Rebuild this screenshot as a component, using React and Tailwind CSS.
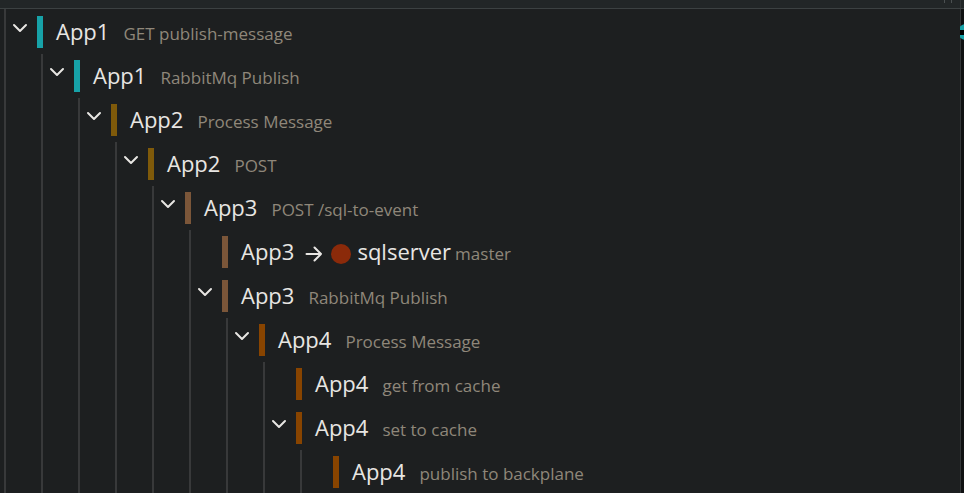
import React, { useState } from "react";

const trace = {
  app: "App1",
  label: "GET publish-message",
  bar: "bg-[#17a2a8]",
  children: [
    {
      app: "App1",
      label: "RabbitMq Publish",
      bar: "bg-[#17a2a8]",
      children: [
        {
          app: "App2",
          label: "Process Message",
          bar: "bg-[#7f5a0a]",
          children: [
            {
              app: "App2",
              label: "POST",
              bar: "bg-[#7f5a0a]",
              children: [
                {
                  app: "App3",
                  label: "POST /sql-to-event",
                  bar: "bg-[#7b5639]",
                  children: [
                    { app: "App3", target: "sqlserver", label: "master", bar: "bg-[#7b5639]" },
                    {
                      app: "App3",
                      label: "RabbitMq Publish",
                      bar: "bg-[#7b5639]",
                      children: [
                        {
                          app: "App4",
                          label: "Process Message",
                          bar: "bg-[#884400]",
                          children: [
                            { app: "App4", label: "get from cache", bar: "bg-[#884400]" },
                            {
                              app: "App4",
                              label: "set to cache",
                              bar: "bg-[#884400]",
                              children: [
                                { app: "App4", label: "publish to backplane", bar: "bg-[#884400]" },
                              ],
                            },
                          ],
                        },
                      ],
                    },
                  ],
                },
              ],
            },
          ],
        },
      ],
    },
  ],
};

function Chevron({ open }) {
  return (
    <svg
      viewBox="0 0 16 10"
      className={open ? "h-[10px] w-4" : "h-[10px] w-4 -rotate-90"}
      fill="none"
      stroke="#e8e6e3"
      strokeWidth="2"
      strokeLinecap="round"
      strokeLinejoin="round"
      aria-hidden="true"
    >
      <path d="M2 2l6 6 6-6" />
    </svg>
  );
}

function Span({ span }) {
  const [open, setOpen] = useState(true);
  const hasChildren = Boolean(span.children);

  return (
    <li>
      <div className="flex h-11 items-center whitespace-nowrap">
        <div className="flex w-[31px] shrink-0 pb-2 pl-[6px]">
          {hasChildren && (
            <button
              type="button"
              aria-label={`Toggle ${span.app} ${span.label}`}
              aria-expanded={open}
              onClick={() => setOpen(!open)}
            >
              <Chevron open={open} />
            </button>
          )}
        </div>
        <span className={`h-8 w-[6px] shrink-0 ${span.bar}`} />
        <div className="flex items-baseline pl-[13px]">
          <span className="text-[22px] leading-8 text-[#e8e6e3]">{span.app}</span>
          {span.target && (
            <>
              <svg
                viewBox="0 0 18 16"
                className="ml-[11px] mt-1 h-4 w-[18px] self-center"
                fill="none"
                stroke="#e8e6e3"
                strokeWidth="2"
                strokeLinecap="round"
                strokeLinejoin="round"
                aria-hidden="true"
              >
                <path d="M1.500 8H16M9.500 1.500L16 8l-6.500 6.500" />
              </svg>
              <span className="ml-2 mt-1 size-5 self-center rounded-full bg-[#8b2a0a]" />
              <span className="ml-[6px] text-[22px] leading-8 text-[#e8e6e3]">{span.target}</span>
            </>
          )}
          <span
            className={`text-[17px] leading-8 text-[#8f877a] ${span.target ? "ml-1" : "ml-[14px]"}`}
          >
            {span.label}
          </span>
        </div>
      </div>
      {hasChildren && open && (
        <ul className="ml-[35px] border-l-2 border-[#38393a]">
          {span.children.map((child, i) => (
            <Span key={i} span={child} />
          ))}
        </ul>
      )}
    </li>
  );
}

export default function App() {
  return (
    <div className="flex h-screen flex-col overflow-hidden bg-[#1d1f20] font-['Open_Sans','Noto_Sans',sans-serif]">
      <header className="flex h-[9px] shrink-0 items-start justify-end border-b border-[#3c4142] bg-[#222627]">
        <span className="mr-[6px] h-[3px] w-px bg-[#4b5051]" />
        <span className="mr-2 h-[3px] w-px bg-[#4b5051]" />
        <span className="mr-[3px] h-full w-px bg-[#303435]" />
      </header>
      <div className="flex min-h-0 flex-1">
        <main className="min-w-0 flex-1 overflow-hidden">
          <ul className="ml-1 border-l-2 border-[#38393a] pt-px">
            <Span span={trace} />
          </ul>
        </main>
        <aside className="w-1 shrink-0 overflow-hidden bg-[#101112] pt-[15px] shadow-[inset_1px_0_#333637]">
          <div className="-ml-[2px] flex size-4 items-center rounded-full bg-[#17a2a8]">
            <span className="h-[5px] w-4 bg-black" />
          </div>
        </aside>
      </div>
    </div>
  );
}
